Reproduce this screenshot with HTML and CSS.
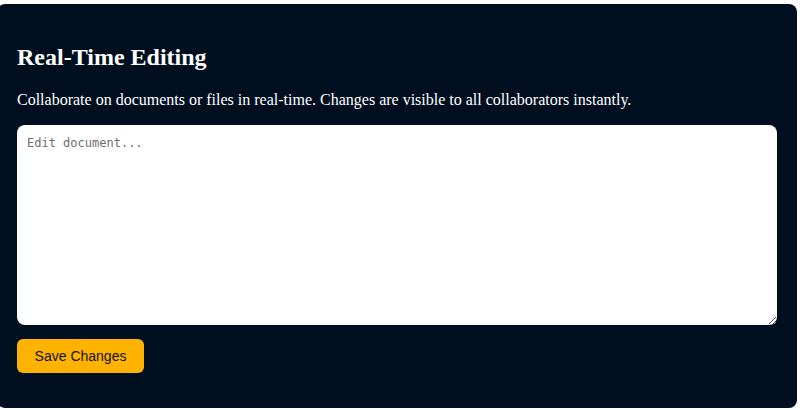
FILE: index.html
```html
<!DOCTYPE html>
<html>
<head>
<meta charset="utf-8">
<link rel="stylesheet" href="styles.css">
</head>
<body>
<div class="card">
  <h2 class="title">Real-Time Editing</h2>
  <p class="desc">Collaborate on documents or files in real-time. Changes are visible to all collaborators instantly.</p>
  <textarea class="editor" placeholder="Edit document..."></textarea>
  <button class="save">Save Changes</button>
</div>
</body>
</html>
```

FILE: styles.css
```css
html, body {
  margin: 0;
  padding: 0;
  background: #ffffff;
}
body {
  padding-top: 4px;
}
.card {
  box-sizing: border-box;
  width: 800px;
  height: 404px;
  margin-left: -3px;
  background: #000f20;
  border-radius: 8px;
  padding: 20px 20px 35px 20px;
  color: #ffffff;
  font-family: "Liberation Serif", serif;
}
.title {
  margin: 20px 0 20px 0;
  font-size: 24px;
  font-weight: bold;
}
.desc {
  margin: 0 0 16px 0;
  font-size: 16px;
}
.editor {
  display: block;
  box-sizing: border-box;
  width: 760px;
  height: 200px;
  margin: 0 0 14px 0;
  padding: 11px 10px 10px 10px;
  border: none;
  border-radius: 8px;
  background: #ffffff;
  font-family: "DejaVu Sans Mono", monospace;
  font-size: 12px;
  color: #000;
  resize: both;
  outline: none;
}
.editor::placeholder {
  color: #6f6f6f;
}
.save {
  display: block;
  width: 127px;
  height: 34px;
  padding: 0;
  border: none;
  border-radius: 6px;
  background: #ffb300;
  color: #111;
  font-family: "Liberation Sans", Arial, sans-serif;
  font-size: 14px;
  cursor: pointer;
}
```
